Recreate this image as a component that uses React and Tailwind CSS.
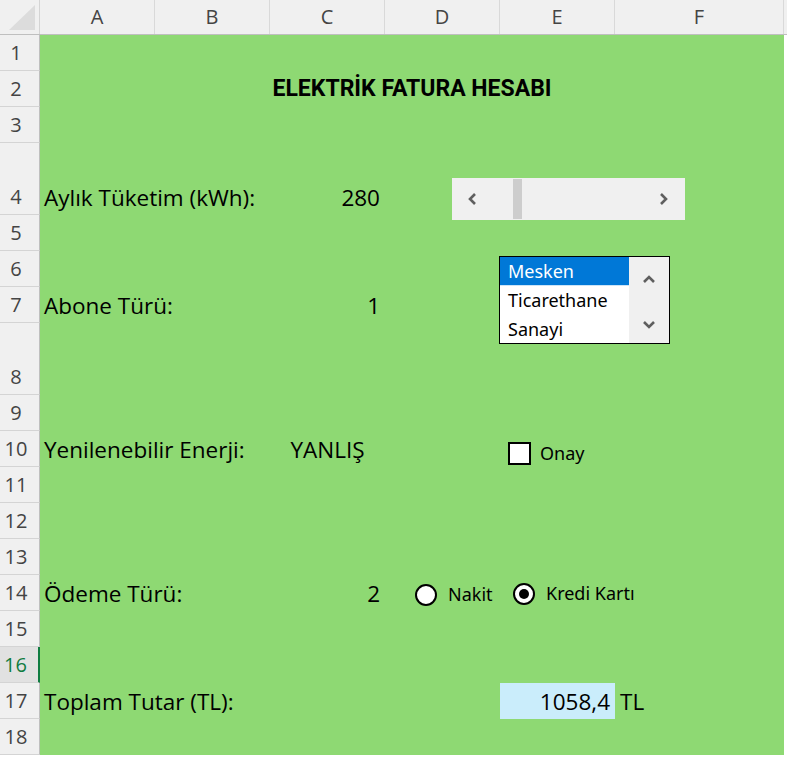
import React from 'react';

const GREEN = 'bg-[#8ed973]';
const CELL_FONT = { fontFamily: '"Open Sans", "Noto Sans", sans-serif' };
const TITLE_FONT = { fontFamily: 'Roboto, "Liberation Sans", sans-serif' };
const CTRL_FONT = { fontFamily: '"Noto Sans", "Open Sans", sans-serif' };

// rows of the sheet, height and cell contents
const rows = [
  { n: 1 },
  { n: 2, title: 'ELEKTRİK FATURA HESABI' },
  { n: 3 },
  { n: 4, tall: true, label: 'Aylık Tüketim (kWh):', value: '280' },
  { n: 5 },
  { n: 6 },
  { n: 7, label: 'Abone Türü:', value: '1' },
  { n: 8, tall: true },
  { n: 9 },
  { n: 10, label: 'Yenilenebilir Enerji:', value: 'YANLIŞ', center: true },
  { n: 11 },
  { n: 12 },
  { n: 13 },
  { n: 14, label: 'Ödeme Türü:', value: '2' },
  { n: 15 },
  { n: 16, active: true },
  { n: 17, label: 'Toplam Tutar (TL):', total: '1058,4' },
  { n: 18 },
];

const columns = ['A', 'B', 'C', 'D', 'E', 'F'];

const Chevron = ({ dir, className }) => {
  const pts = {
    left: '7,1 2,6 7,11',
    right: '2,1 7,6 2,11',
    up: '1,7 6,2 11,7',
    down: '1,2 6,7 11,2',
  }[dir];
  const horiz = dir === 'left' || dir === 'right';
  return (
    <svg
      width={horiz ? 9 : 12}
      height={horiz ? 12 : 9}
      viewBox={horiz ? '0 0 9 12' : '0 0 12 9'}
      className={className}
    >
      <polyline points={pts} fill="none" stroke="#5f5f5f" strokeWidth="2.6" />
    </svg>
  );
};

const Radio = ({ checked }) => (
  <div className="w-[22px] h-[22px] rounded-full border-2 border-black bg-white flex items-center justify-center">
    {checked && <div className="w-[10px] h-[10px] rounded-full bg-black" />}
  </div>
);

const SheetRow = ({ row }) => (
  <div className={`flex ${row.tall ? 'h-[72px]' : 'h-[36px]'}`}>
    <div
      className={`w-[40px] shrink-0 flex items-end justify-center pr-[7px] pb-[5px] border-b border-r text-[20px] leading-[24px] ${
        row.active
          ? 'bg-[#e1e1e1] text-[#107c41] border-b-[#d4d4d4] border-r-2 border-r-[#107c41]'
          : 'bg-[#f0f0f0] text-[#444444] border-b-[#d4d4d4] border-r-[#bfbfbf]'
      }`}
    >
      {row.n}
    </div>
    <div className={`w-[744px] shrink-0 ${GREEN} grid grid-cols-[115px_115px_115px_115px_115px_169px] text-[22.5px] leading-[24px] text-black`}>
      {row.title ? (
        <div className="col-span-6 flex items-end justify-center pb-[6px] font-bold text-[23px]" style={TITLE_FONT}>
          {row.title}
        </div>
      ) : (
        <>
          <div className="flex items-end pl-[4px] pb-[5px] whitespace-nowrap overflow-visible">
            {row.label}
          </div>
          <div />
          <div className={`flex items-end pb-[5px] pr-[5px] ${row.center ? 'justify-center pl-[5px]' : 'justify-end'}`}>
            {row.value}
          </div>
          <div />
          <div className={`flex items-end justify-end pb-[5px] pr-[5px] ${row.total ? 'bg-[#caedfb]' : ''}`}>
            {row.total}
          </div>
          <div className="flex items-end pb-[5px] pl-[5px]">{row.total ? 'TL' : ''}</div>
        </>
      )}
    </div>
  </div>
);

export default function App() {
  return (
    <div className="relative w-[787px] h-[758px] bg-white overflow-hidden" style={CELL_FONT}>
      {/* column headers */}
      <div className="flex h-[35px] border-b border-[#bfbfbf] bg-[#f0f0f0]">
        <div className="w-[40px] shrink-0 border-r border-[#d4d4d4] relative">
          <svg width="28" height="26" className="absolute left-[9px] top-[5px]">
            <polygon points="26,0 26,25 0,25" fill="#dcdcdc" />
          </svg>
        </div>
        {columns.map((c) => (
          <div
            key={c}
            className={`${c === 'F' ? 'w-[169px]' : 'w-[115px]'} shrink-0 border-r border-[#d9d9d9] flex items-end justify-center pb-[5px] text-[20px] leading-[24px] text-[#444444]`}
          >
            {c}
          </div>
        ))}
      </div>

      {rows.map((r) => (
        <SheetRow key={r.n} row={r} />
      ))}

      {/* form controls floating over the sheet */}
      <div className="absolute left-[452px] top-[178px] w-[233px] h-[42px] bg-[#f0f0f0] flex items-center">
        <Chevron dir="left" className="ml-[16px]" />
        <div className="ml-[36px] w-[9px] h-[40px] bg-[#cdcdcd]" />
        <div className="flex-1" />
        <Chevron dir="right" className="mr-[17px]" />
      </div>

      <div
        className="absolute left-[499px] top-[256px] w-[171px] h-[88px] border border-black bg-white flex text-[18px] leading-[24px]"
        style={CTRL_FONT}
      >
        <div className="w-[129px] flex flex-col">
          <div className="h-[29px] bg-[#0078d7] text-white pl-[8px] flex items-center border-b border-[#cce4f7]">Mesken</div>
          <div className="h-[28px] text-black pl-[8px] flex items-center">Ticarethane</div>
          <div className="h-[29px] text-black pl-[8px] flex items-center">Sanayi</div>
        </div>
        <div className="flex-1 bg-[#f0f0f0] flex flex-col items-center justify-between pt-[18px] pb-[14px]">
          <Chevron dir="up" />
          <Chevron dir="down" />
        </div>
      </div>

      <div className="absolute left-[508px] top-[440px] flex items-center gap-[9px] text-[18px] text-black" style={CTRL_FONT}>
        <div className="w-[23px] h-[23px] border-2 border-black bg-white" />
        <span>Onay</span>
      </div>

      <div className="absolute left-[415px] top-[581px] flex items-center gap-[11px] text-[18px] text-black" style={CTRL_FONT}>
        <Radio />
        <span>Nakit</span>
      </div>

      <div className="absolute left-[513px] top-[580px] flex items-center gap-[11px] text-[18px] text-black" style={CTRL_FONT}>
        <Radio checked />
        <span>Kredi Kartı</span>
      </div>
    </div>
  );
}
